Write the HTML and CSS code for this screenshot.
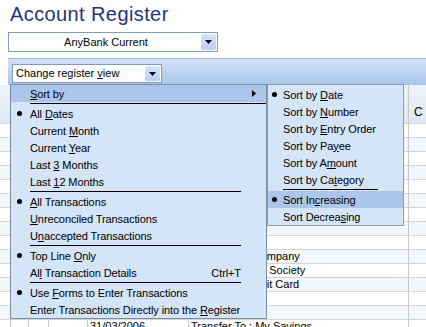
FILE: index.html
```html
<!DOCTYPE html>
<html lang="en">
<head>
  <meta charset="UTF-8">
  <title>Account Register</title>
  <link rel="stylesheet" href="styles.css">
</head>
<body>
  <div class="page">
    <h1 class="title">Account Register</h1>

    <div class="combo account-combo">
      <span class="combo-text centered">AnyBank Current</span>
      <span class="combo-btn"><svg width="7" height="4" viewBox="0 0 7 4"><path d="M0 0h7L3.5 4z"/></svg></span>
    </div>

    <div class="toolbar">
      <div class="combo view-combo">
        <span class="combo-text">Change register <u>v</u>iew</span>
        <span class="combo-btn"><svg width="7" height="4" viewBox="0 0 7 4"><path d="M0 0h7L3.5 4z"/></svg></span>
      </div>
    </div>

    <div class="register">
      <div class="reg-head">
        <span></span><span></span><span></span><span></span><span></span><span></span>
        <span class="head-label">C</span>
      </div>
      <div class="reg-row"><span></span><span></span><span></span><span></span><span>02/03/2006</span><span>Opening Balance</span><span></span></div>
      <div class="reg-row alt"><span></span><span></span><span></span><span></span><span>03/03/2006</span><span>Salary</span><span></span></div>
      <div class="reg-row"><span></span><span></span><span></span><span></span><span>06/03/2006</span><span>Supermarket</span><span></span></div>
      <div class="reg-row alt"><span></span><span></span><span></span><span></span><span>08/03/2006</span><span>Petrol Station</span><span></span></div>
      <div class="reg-row"><span></span><span></span><span></span><span></span><span>10/03/2006</span><span>Cash Withdrawal</span><span></span></div>
      <div class="reg-row alt"><span></span><span></span><span></span><span></span><span>13/03/2006</span><span>Telephone</span><span></span></div>
      <div class="reg-row"><span></span><span></span><span></span><span></span><span>15/03/2006</span><span>Supermarket</span><span></span></div>
      <div class="reg-row alt"><span></span><span></span><span></span><span></span><span>17/03/2006</span><span>Council Tax</span><span></span></div>
      <div class="reg-row"><span></span><span></span><span></span><span></span><span>20/03/2006</span><span>Bookshop</span><span></span></div>
      <div class="reg-row alt"><span></span><span></span><span></span><span></span><span>22/03/2006</span><span>Anytown Oil Company</span><span></span></div>
      <div class="reg-row"><span></span><span></span><span></span><span></span><span>24/03/2006</span><span>Bilston Building Society</span><span></span></div>
      <div class="reg-row alt"><span></span><span></span><span></span><span></span><span>27/03/2006</span><span>Anywhere Credit Card</span><span></span></div>
      <div class="reg-row"><span></span><span></span><span></span><span></span><span>28/03/2006</span><span>Supermarket</span><span></span></div>
      <div class="reg-row alt"><span></span><span></span><span></span><span></span><span>30/03/2006</span><span>Insurance</span><span></span></div>
      <div class="reg-row"><span></span><span></span><span></span><span></span><span>31/03/2006</span><span>Transfer To : My Savings</span><span></span></div>
    </div>

    <!-- popup menu opened from "Change register view" -->
    <div class="menu main-menu">
      <div class="mi hot"><span class="mark"></span><span class="label"><u>S</u>ort by</span><span class="key"></span><span class="sub-arrow"><svg width="4" height="7" viewBox="0 0 4 7"><path d="M0 0l4 3.5L0 7z"/></svg></span></div>
      <div class="sep wide"></div>
      <div class="mi"><span class="mark"><i class="dot"></i></span><span class="label">All <u>D</u>ates</span></div>
      <div class="mi"><span class="mark"></span><span class="label">Current <u>M</u>onth</span></div>
      <div class="mi"><span class="mark"></span><span class="label">Current <u>Y</u>ear</span></div>
      <div class="mi"><span class="mark"></span><span class="label">Last <u>3</u> Months</span></div>
      <div class="mi"><span class="mark"></span><span class="label">Last <u>1</u>2 Months</span></div>
      <div class="sep"></div>
      <div class="mi"><span class="mark"><i class="dot"></i></span><span class="label"><u>A</u>ll Transactions</span></div>
      <div class="mi"><span class="mark"></span><span class="label"><u>U</u>nreconciled Transactions</span></div>
      <div class="mi"><span class="mark"></span><span class="label">U<u>n</u>accepted Transactions</span></div>
      <div class="sep"></div>
      <div class="mi"><span class="mark"><i class="dot"></i></span><span class="label">Top Line <u>O</u>nly</span></div>
      <div class="mi"><span class="mark"></span><span class="label">Al<u>l</u> Transaction Details</span><span class="key">Ctrl+T</span></div>
      <div class="sep"></div>
      <div class="mi"><span class="mark"><i class="dot"></i></span><span class="label">Use <u>F</u>orms to Enter Transactions</span></div>
      <div class="mi"><span class="mark"></span><span class="label">Enter Transactions Directly into the <u>R</u>egister</span></div>
    </div>

    <div class="menu sub-menu">
      <div class="mi"><span class="mark"><i class="dot"></i></span><span class="label">Sort by <u>D</u>ate</span></div>
      <div class="mi"><span class="mark"></span><span class="label">Sort by <u>N</u>umber</span></div>
      <div class="mi"><span class="mark"></span><span class="label">Sort by <u>E</u>ntry Order</span></div>
      <div class="mi"><span class="mark"></span><span class="label">Sort by Pa<u>y</u>ee</span></div>
      <div class="mi"><span class="mark"></span><span class="label">Sort by A<u>m</u>ount</span></div>
      <div class="mi"><span class="mark"></span><span class="label">Sort by Ca<u>t</u>egory</span></div>
      <div class="sep"></div>
      <div class="mi hot"><span class="mark"><i class="dot"></i></span><span class="label">Sort In<u>c</u>reasing</span></div>
      <div class="mi"><span class="mark"></span><span class="label">Sort Decrea<u>s</u>ing</span></div>
    </div>
  </div>
</body>
</html>
```

FILE: styles.css
```css
body {
  margin: 0;
  background-color: #fff;
  font-family: "Liberation Sans", Arial, sans-serif;
  font-size: 11px;
  color: #000;
}
u {
  text-underline-offset: 1px;
}
.page {
  position: relative;
  width: 426px;
  height: 327px;
  overflow: hidden;
}
.title {
  margin: 0;
  padding: 2px 0 0 10px;
  font-size: 20px;
  line-height: 24px;
  font-weight: normal;
  letter-spacing: 0.4px;
  color: #22367a;
}

/* combo boxes */
.combo {
  display: flex;
  box-sizing: border-box;
  border: 1px solid #7f9db9;
  background-color: #fff;
}
.combo-text {
  flex: 1;
  padding-left: 3px;
  white-space: nowrap;
}
.combo-text.centered {
  text-align: center;
}
.account-combo .combo-text {
  line-height: 18px;
}
.view-combo .combo-text {
  line-height: 17px;
}
.combo-btn {
  width: 15px;
  margin: 1px;
  display: flex;
  align-items: center;
  justify-content: center;
  background: linear-gradient(#d6e3fb, #b9cdf5);
  border-radius: 2px;
}
.account-combo {
  margin: 6px 0 0 8px;
  width: 210px;
  height: 20px;
}
.toolbar {
  margin: 6px 0 0 8px;
  height: 27px;
  box-sizing: border-box;
  border-top: 1px solid #a4b6d1;
  background: linear-gradient(#d2e2f7, #a9c5ea);
  padding: 5px 0 0 4px;
}
.view-combo {
  width: 150px;
  height: 19px;
}

/* register grid */
.reg-head, .reg-row {
  display: grid;
  grid-template-columns: 10px 18px 20px 39px 101px 220px 1fr;
}
.reg-head {
  height: 38px;
  background: linear-gradient(#eef3fa, #dde7f4);
}
.reg-row {
  height: 14px;
  box-sizing: border-box;
  border-top: 1px solid #d4d4d4;
  line-height: 13px;
}
.reg-row.alt {
  background-color: #f3f6fb;
}
.reg-head span, .reg-row span {
  border-left: 1px solid #c8c8c8;
  padding-left: 2px;
  white-space: nowrap;
  overflow: hidden;
}
.reg-head span:first-child, .reg-row span:first-child {
  border-left: none;
}
.head-label {
  display: flex;
  align-items: flex-end;
  padding-bottom: 4px;
  padding-left: 5px !important;
  font-size: 12px;
}

/* popup menus */
.menu {
  position: absolute;
  box-sizing: border-box;
  background-color: #d4e5f8;
  border: 1px solid #7c8ca3;
  letter-spacing: -0.1px;
}
.main-menu {
  left: 10px;
  top: 84px;
  width: 257px;
}
.sub-menu {
  left: 267px;
  top: 84px;
  width: 137px;
  padding-top: 1px;
  border-color: #8a9cb2;
}
.mi {
  display: grid;
  grid-template-columns: 19px 1fr auto 25px;
  align-items: center;
  height: 17px;
  white-space: nowrap;
}
.sub-menu .mi {
  grid-template-columns: 15px 1fr 25px;
}
.mi.hot {
  background-color: #abc6ea;
}
.mark {
  display: flex;
  align-items: center;
}
.dot {
  display: block;
  width: 5px;
  height: 5px;
  margin-left: 6px;
  border-radius: 50%;
  background-color: #000;
}
.sub-menu .dot {
  margin-left: 4px;
}
.key {
  text-align: right;
}
.sub-arrow {
  display: flex;
  padding-left: 11px;
}
.sep {
  height: 3px;
  margin: 0 25px 0 19px;
  display: flex;
  align-items: center;
}
.sep::after {
  content: "";
  flex: 1;
  height: 1px;
  background-color: #000;
}
.sep.wide {
  margin-right: 0;
}
.sub-menu .sep {
  margin: 0 25px 0 15px;
}
```
